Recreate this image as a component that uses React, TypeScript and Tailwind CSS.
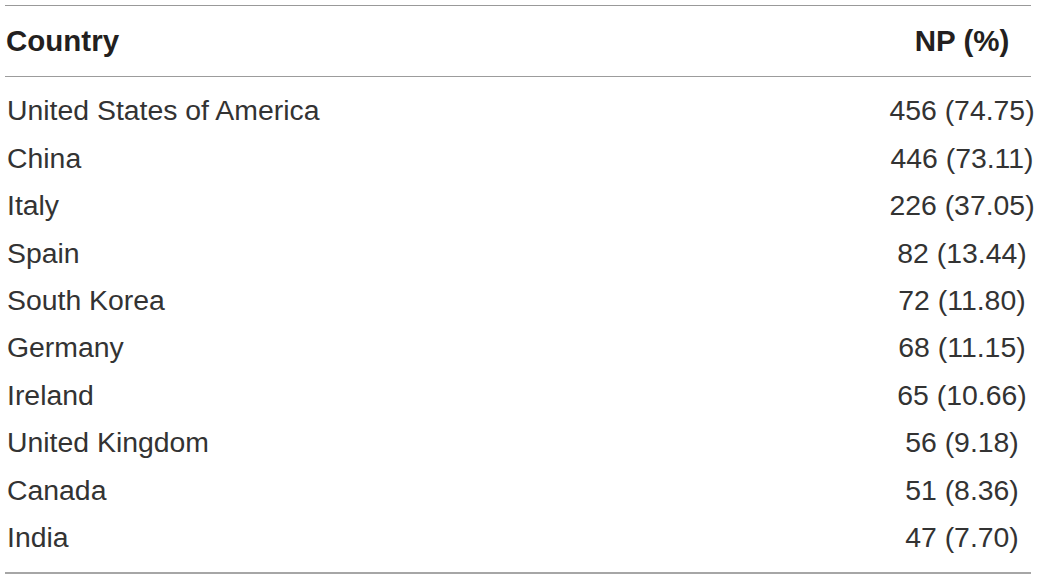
import React from "react";

const rows = [
  { country: "United States of America", np: "456 (74.75)" },
  { country: "China", np: "446 (73.11)" },
  { country: "Italy", np: "226 (37.05)" },
  { country: "Spain", np: "82 (13.44)" },
  { country: "South Korea", np: "72 (11.80)" },
  { country: "Germany", np: "68 (11.15)" },
  { country: "Ireland", np: "65 (10.66)" },
  { country: "United Kingdom", np: "56 (9.18)" },
  { country: "Canada", np: "51 (8.36)" },
  { country: "India", np: "47 (7.70)" },
];

const App = () => {
  return (
    <div
      className="w-[1039px] h-[580px] bg-white pt-[5px] pl-[5px] text-[28.4px] leading-none whitespace-nowrap"
      style={{ fontFamily: '"Liberation Sans", Arial, sans-serif' }}
    >
      <div className="w-[1026px] border-t border-b-2 border-t-[#999999] border-b-[#a6a6a6]">
        <div className="flex items-center h-[71px] border-b border-[#9c9c9c] font-bold text-[29.5px] text-[#231f20]">
          <div className="flex-1 pl-[1px]">Country</div>
          <div className="w-[146px] -mr-[4px] text-center">NP (%)</div>
        </div>
        <div className="pt-[10px] pb-[11px] text-[#333333]">
          {rows.map((row) => (
            <div key={row.country} className="flex items-center h-[47.4px]">
              <div className="flex-1 pl-[2px]">{row.country}</div>
              <div className="w-[146px] -mr-[4px] text-center">{row.np}</div>
            </div>
          ))}
        </div>
      </div>
    </div>
  );
};

export default App;
